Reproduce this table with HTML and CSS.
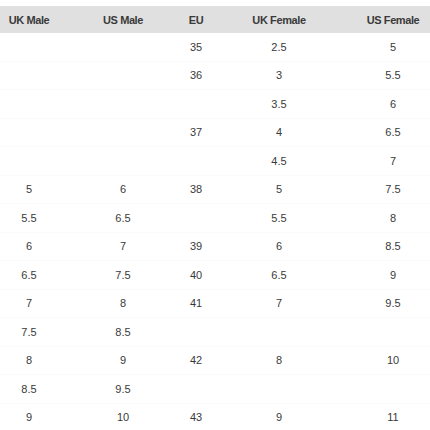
FILE: index.html
```html
<!DOCTYPE html>
<html>
<head>
<meta charset="utf-8">
<link rel="stylesheet" href="styles.css">
</head>
<body>
<table class="sizes">
  <colgroup>
    <col class="c1"><col class="c2"><col class="c3"><col class="c4"><col class="c5">
  </colgroup>
  <thead>
    <tr><th>UK Male</th><th>US Male</th><th>EU</th><th>UK Female</th><th>US Female</th></tr>
  </thead>
  <tbody>
    <tr><td></td><td></td><td>35</td><td>2.5</td><td>5</td></tr>
    <tr><td></td><td></td><td>36</td><td>3</td><td>5.5</td></tr>
    <tr><td></td><td></td><td></td><td>3.5</td><td>6</td></tr>
    <tr><td></td><td></td><td>37</td><td>4</td><td>6.5</td></tr>
    <tr><td></td><td></td><td></td><td>4.5</td><td>7</td></tr>
    <tr><td>5</td><td>6</td><td>38</td><td>5</td><td>7.5</td></tr>
    <tr><td>5.5</td><td>6.5</td><td></td><td>5.5</td><td>8</td></tr>
    <tr><td>6</td><td>7</td><td>39</td><td>6</td><td>8.5</td></tr>
    <tr><td>6.5</td><td>7.5</td><td>40</td><td>6.5</td><td>9</td></tr>
    <tr><td>7</td><td>8</td><td>41</td><td>7</td><td>9.5</td></tr>
    <tr><td>7.5</td><td>8.5</td><td></td><td></td><td></td></tr>
    <tr><td>8</td><td>9</td><td>42</td><td>8</td><td>10</td></tr>
    <tr><td>8.5</td><td>9.5</td><td></td><td></td><td></td></tr>
    <tr><td>9</td><td>10</td><td>43</td><td>9</td><td>11</td></tr>
  </tbody>
</table>
</body>
</html>
```
FILE: styles.css
```css
html, body {
  margin: 0;
  padding: 0;
  background: #fff;
  overflow: hidden;
}
body {
  font-family: "Liberation Sans", Arial, sans-serif;
  color: #333;
}
.sizes {
  margin-top: 6px;
  width: 432px;
  table-layout: fixed;
  border-collapse: collapse;
}
.c1 { width: 58px; }
.c2 { width: 130px; }
.c3 { width: 16px; }
.c4 { width: 150px; }
.c5 { width: 78px; }
.sizes th {
  background: #e0e0e0;
  height: 27px;
  padding: 0;
  font-size: 11px;
  font-weight: 700;
  letter-spacing: -0.4px;
  color: #3a3a3a;
  text-align: center;
  white-space: nowrap;
}
.sizes td {
  height: 27.5px;
  padding: 0;
  font-size: 11px;
  color: #3a3a3a;
  text-align: center;
  white-space: nowrap;
  border-bottom: 1px solid #fafafa;
}
```
